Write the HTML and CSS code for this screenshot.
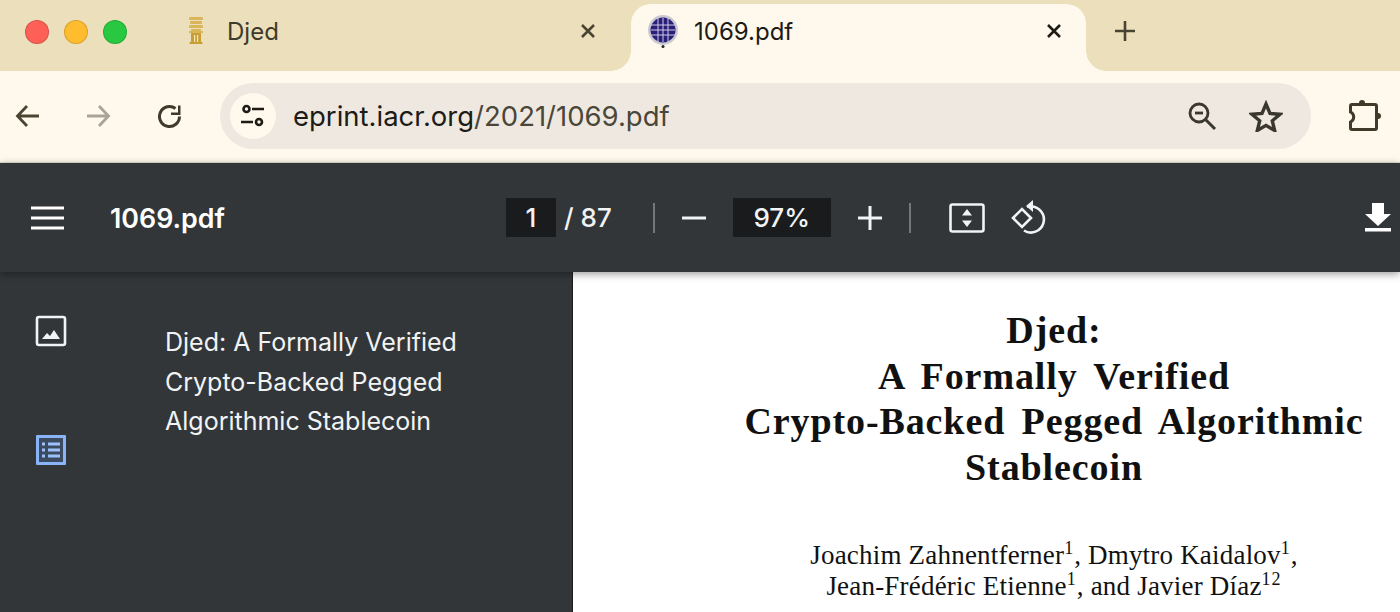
FILE: index.html
```html
<!DOCTYPE html>
<html lang="en">
<head>
    <meta charset="UTF-8">
    <title>1069.pdf</title>
    <link rel="stylesheet" href="styles.css">
</head>
<body>
    <div class="tabstrip">
        <div class="traffic">
            <span class="light red"></span>
            <span class="light yellow"></span>
            <span class="light green"></span>
        </div>
        <div class="tab">
            <svg class="favicon" width="18" height="28" viewBox="0 0 18 28">
                <g fill="#d9b65a">
                    <rect x="2" y="0" width="14" height="3" rx="1"/>
                    <rect x="3" y="4" width="12" height="3" rx="1"/>
                    <rect x="2" y="8" width="14" height="3" rx="1"/>
                    <rect x="4" y="12" width="10" height="2"/>
                    <rect x="2" y="14" width="14" height="2"/>
                </g>
                <path d="M4 16h10v9h1.500v2H2.500v-2H4z" fill="#c99f35"/>
                <rect x="7" y="18" width="1.200" height="7" fill="#f3e6bd"/>
                <rect x="10" y="18" width="1.200" height="7" fill="#f3e6bd"/>
            </svg>
            <span class="tab-title">Djed</span>
            <svg class="tab-close" width="16" height="16" viewBox="0 0 16 16"><path d="M2 2l12 12M14 2L2 14" stroke="#4a4433" stroke-width="2.600"/></svg>
        </div>
        <div class="tab active">
            <svg class="favicon" width="32" height="34" viewBox="0 0 32 34">
                <circle cx="16" cy="16" r="15" fill="#c9c9cf"/>
                <circle cx="16" cy="16" r="12.500" fill="#2a1f78"/>
                <path d="M4 11h24M4 16h24M4 21h24M11 4v24M16 4v24M21 4v24" stroke="#cfcbe6" stroke-width="1"/>
                <circle cx="16" cy="32.500" r="1.500" fill="#222"/>
            </svg>
            <span class="tab-title">1069.pdf</span>
            <svg class="tab-close" width="16" height="16" viewBox="0 0 16 16"><path d="M2 2l12 12M14 2L2 14" stroke="#1c1b16" stroke-width="2.600"/></svg>
        </div>
        <svg class="new-tab" width="22" height="22" viewBox="0 0 22 22"><path d="M11 1v20M1 11h20" stroke="#4a4433" stroke-width="2.600"/></svg>
    </div>

    <div class="toolbar">
        <svg class="nav-icon" width="26" height="26" viewBox="0 0 26 26"><path d="M24 13H3M12 3L2.500 13l9.500 10" fill="none" stroke="#4a4433" stroke-width="2.800"/></svg>
        <svg class="nav-icon" width="26" height="26" viewBox="0 0 26 26"><path d="M2 13h21M14 3l9.500 10L14 23" fill="none" stroke="#a8a598" stroke-width="2.800"/></svg>
        <svg class="nav-icon" width="26" height="26" viewBox="0 0 26 26"><path d="M22.500 13.500A10 10 0 1 1 18.500 5.500" fill="none" stroke="#3f3a2a" stroke-width="3"/><path d="M23.500 2.500v9.500H14v-2.500h7V2.500z" fill="#3f3a2a"/></svg>
        <div class="omnibox">
            <span class="site-info">
                <svg width="26" height="26" viewBox="0 0 26 26">
                    <g fill="none" stroke="#1c1b16" stroke-width="2.600"><circle cx="6.500" cy="6" r="3"/><circle cx="19" cy="19" r="3"/><path d="M12 6h12M1 19h12"/></g>
                </svg>
            </span>
            <span class="url">eprint.iacr.org<span class="url-path">/2021/1069.pdf</span></span>
            <svg class="omni-zoom" width="30" height="30" viewBox="0 0 30 30"><circle cx="12" cy="12" r="9" fill="none" stroke="#3a382c" stroke-width="2.800"/><path d="M8 12h8" stroke="#3a382c" stroke-width="2.800"/><path d="M18.500 18.500L28 28" stroke="#3a382c" stroke-width="3"/></svg>
            <svg class="omni-star" width="34" height="32" viewBox="0 0 34 32"><path d="M17 4l4 9.500 10 .8-7.700 6.500 2.400 9.700L17 25.400 8.300 30.500l2.400-9.700L3 14.300l10-.8z" fill="none" stroke="#3a382c" stroke-width="3.400" stroke-linejoin="miter"/></svg>
        </div>
        <svg class="puzzle" width="34" height="34" viewBox="0 0 34 34">
            <path d="M4 5.500h23a1.500 1.500 0 0 1 1.500 1.500v22a1.500 1.500 0 0 1-1.500 1.500H4a1.500 1.500 0 0 1-1.500-1.500v-6a5.500 5.500 0 0 0 0-10V7a1.500 1.500 0 0 1 1.500-1.500z" fill="none" stroke="#3f3a2a" stroke-width="3"/>
            <circle cx="14" cy="4" r="3" fill="#3f3a2a"/>
            <circle cx="30" cy="17" r="3" fill="#3f3a2a"/>
        </svg>
    </div>

    <div class="pdf-bar">
        <svg class="menu-icon" width="33" height="24" viewBox="0 0 33 24"><path d="M0 2h33M0 12h33M0 22h33" stroke="#fff" stroke-width="3"/></svg>
        <span class="pdf-name">1069.pdf</span>
        <div class="pdf-controls">
            <span class="field page-field">1</span>
            <span class="page-total">/ 87</span>
            <span class="divider"></span>
            <svg class="ctl" width="26" height="26" viewBox="0 0 26 26"><path d="M1 13h24" stroke="#f1f3f4" stroke-width="3"/></svg>
            <span class="field zoom-field">97%</span>
            <svg class="ctl" width="26" height="26" viewBox="0 0 26 26"><path d="M1 13h24M13 1v24" stroke="#f1f3f4" stroke-width="3"/></svg>
            <span class="divider"></span>
            <svg class="fit" width="36" height="30" viewBox="0 0 36 30"><rect x="1.500" y="1.500" width="33" height="27" rx="2" fill="none" stroke="#f1f3f4" stroke-width="2.600"/><path d="M18 6l5 6.500H13zM18 24l-5-6.500h10z" fill="#f1f3f4"/></svg>
            <svg class="rotate" width="36" height="36" viewBox="0 0 36 36"><path d="M2 18l9-9 9 9-9 9z" fill="none" stroke="#f1f3f4" stroke-width="2.600"/><path d="M16 6.500h4a13 13 0 1 1-7 24" fill="none" stroke="#f1f3f4" stroke-width="2.600"/><path d="M22 0v12l-7-6z" fill="#f1f3f4"/></svg>
        </div>
        <svg class="download" width="26" height="30" viewBox="0 0 26 30"><path d="M7 1h12v11h7L13 24 0 12h7z" fill="#fff"/><rect x="0" y="26" width="26" height="3.500" fill="#fff"/></svg>
    </div>

    <div class="viewer">
        <aside class="sidebar">
            <div class="side-icons">
                <svg width="32" height="32" viewBox="0 0 32 32"><rect x="2" y="2" width="28" height="28" rx="2" fill="none" stroke="#f1f3f4" stroke-width="2.600"/><path d="M7 24l5-6 3 3 4-6 6 9z" fill="#f1f3f4"/></svg>
                <svg width="32" height="32" viewBox="0 0 32 32"><rect x="1" y="1" width="30" height="30" rx="1" fill="#8ab4f8"/><rect x="4" y="4" width="24" height="24" fill="#3c4a60"/><path d="M13 10h12M13 16h12M13 22h12M7 10h3M7 16h3M7 22h3" stroke="#9cc0fa" stroke-width="3"/></svg>
            </div>
            <div class="outline">Djed: A Formally Verified Crypto-Backed Pegged Algorithmic Stablecoin</div>
        </aside>
        <main class="page">
            <h1 class="paper-title">Djed:<br>A Formally Verified<br>Crypto-Backed Pegged Algorithmic<br>Stablecoin</h1>
            <p class="authors">Joachim Zahnentferner<sup>1</sup>, Dmytro Kaidalov<sup>1</sup>,<br>Jean-Frédéric Etienne<sup>1</sup>, and Javier Díaz<sup>12</sup></p>
        </main>
    </div>
</body>
</html>
```

FILE: styles.css
```css
html, body {
    height: 100%;
}

body {
    margin: 0;
    overflow: hidden;
    font-family: 'Inter', 'Roboto', sans-serif;
    display: flex;
    flex-direction: column;
    background-color: #323639;
}

svg {
    display: block;
    flex: none;
}

/* Browser tabs */
.tabstrip {
    height: 71px;
    flex: none;
    display: flex;
    align-items: flex-end;
    background-color: #ebe0bb;
}

.traffic {
    width: 160px;
    height: 67px;
    display: flex;
    align-items: center;
    gap: 15px;
    padding-left: 25px;
    padding-bottom: 11px;
    box-sizing: border-box;
    align-self: flex-end;
}

.light {
    width: 24px;
    height: 24px;
    box-sizing: border-box;
    border-radius: 50%;
    border: 1px solid rgba(0, 0, 0, 0.15);
}

.red { background-color: #fe5f57; }
.yellow { background-color: #febc2e; }
.green { background-color: #28c840; }

.tab {
    width: 471px;
    height: 67px;
    padding: 0 35px 13px 27px;
    box-sizing: border-box;
    display: flex;
    align-items: center;
    font-size: 24px;
    color: #3f3a2a;
}

.tab .tab-title {
    margin-left: 22px;
}

.tab-close {
    margin-left: auto;
}

.tab.active {
    width: 455px;
    padding: 0 24px 13px 16px;
    position: relative;
    color: #1c1b16;
    background-color: #fef9ec;
    border-radius: 20px 20px 0 0;
}

.tab.active .tab-title {
    margin-left: 15px;
}

/* curved feet of the active tab */
.tab.active::before,
.tab.active::after {
    content: "";
    position: absolute;
    bottom: 0;
    width: 20px;
    height: 20px;
    background: radial-gradient(circle at 0 0, #ebe0bb 19.500px, #fef9ec 20px);
}

.tab.active::before {
    left: -20px;
}

.tab.active::after {
    right: -20px;
    transform: scaleX(-1);
}

.new-tab {
    margin: 0 0 29px 28px;
}

/* Address bar */
.toolbar {
    height: 92px;
    flex: none;
    display: flex;
    align-items: center;
    padding: 0 0 2px 15px;
    box-sizing: border-box;
    background-color: #fef9ec;
    border-bottom: 1px solid #e6e1d2;
}

.toolbar .nav-icon {
    margin-right: 44px;
}

.toolbar .nav-icon:nth-child(2) {
    margin-right: 46px;
}

.toolbar .nav-icon:nth-child(3) {
    margin-right: 37px;
}

.omnibox {
    width: 1091px;
    height: 66px;
    flex: none;
    display: flex;
    align-items: center;
    padding: 0 28px 0 10px;
    box-sizing: border-box;
    border-radius: 33px;
    background-color: #eee8e1;
}

.site-info {
    width: 46px;
    height: 46px;
    flex: none;
    display: flex;
    align-items: center;
    justify-content: center;
    border-radius: 50%;
    background-color: #fef9ec;
}

.url {
    margin-left: 17px;
    font-size: 27.500px;
    color: #1c1b16;
}

.url-path {
    color: #4a4638;
}

.omni-zoom {
    margin-left: auto;
}

.omni-star {
    margin-left: 32px;
}

.puzzle {
    margin-left: 37px;
}

/* PDF viewer bar */
.pdf-bar {
    height: 109px;
    flex: none;
    position: relative;
    z-index: 1;
    display: flex;
    align-items: center;
    padding-left: 31px;
    box-sizing: border-box;
    color: #fff;
    background-color: #323639;
    box-shadow: 0 2px 8px rgba(0, 0, 0, 0.4);
}

.pdf-name {
    margin-left: 46px;
    width: 396px;
    font-size: 26.800px;
    font-weight: 600;
}

.pdf-controls {
    display: flex;
    align-items: center;
    font-size: 26px;
    font-weight: 500;
    color: #f1f3f4;
}

.field {
    height: 39px;
    display: flex;
    align-items: center;
    justify-content: center;
    background-color: #191b1c;
}

.page-field {
    width: 50px;
}

.page-total {
    margin: 0 41px 0 8px;
}

.divider {
    width: 2px;
    height: 30px;
    background-color: #74777a;
}

.ctl {
    margin: 0 26px;
}

.zoom-field {
    width: 98px;
}

.fit {
    margin-left: 38px;
}

.rotate {
    margin-left: 26px;
}

.download {
    margin-left: auto;
    margin-right: 9px;
    margin-top: -2px;
}

/* Body of the viewer */
.viewer {
    flex: 1;
    display: flex;
    min-height: 0;
}

.sidebar {
    width: 573px;
    flex: none;
    display: flex;
    border-right: 1px solid #1a1c1e;
    box-sizing: border-box;
    background-color: #323639;
}

.side-icons {
    width: 165px;
    flex: none;
    display: flex;
    flex-direction: column;
    gap: 87px;
    padding: 43px 0 0 35px;
    box-sizing: border-box;
}

.outline {
    width: 320px;
    padding-top: 51px;
    font-size: 25px;
    line-height: 39.500px;
    color: #f1f3f4;
}

.page {
    flex: 1;
    padding: 36px 0 0 135px;
    text-align: center;
    color: #111;
    background-color: #fff;
    font-family: 'Liberation Serif', serif;
}

.paper-title {
    margin: 0;
    font-size: 38px;
    line-height: 45.500px;
    font-weight: 700;
    word-spacing: 6px;
    letter-spacing: 0.900px;
}

.authors {
    margin: 50px 0 0;
    font-size: 27px;
    line-height: 31px;
    letter-spacing: 0.200px;
}

.authors sup {
    font-size: 18px;
    line-height: 0;
    letter-spacing: 1px;
}
```
